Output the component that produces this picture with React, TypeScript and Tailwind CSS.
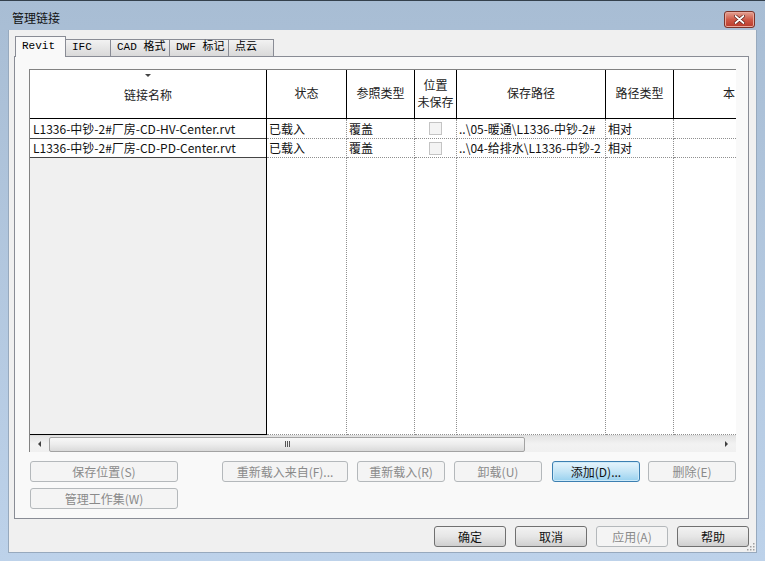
import React from 'react';

const cjk = "font-['Microsoft_YaHei','Noto_Sans_CJK_SC',sans-serif]";

const columns = [
  { w: 'w-[237px]', title: '链接名称', first: true },
  { w: 'w-[80px]', title: '状态' },
  { w: 'w-[68px]', title: '参照类型' },
  { w: 'w-[42px]', title: '位置\n未保存', check: true },
  { w: 'w-[149px]', title: '保存路径' },
  { w: 'w-[68px]', title: '路径类型' },
  { w: 'w-[62px]', title: '本', last: true },
];

// path text is clipped by its column in the dialog
const rows = [
  ['L1336-中钞-2#厂房-CD-HV-Center.rvt', '已载入', '覆盖', '', '..\\05-暖通\\L1336-中钞-2#', '相对', ''],
  ['L1336-中钞-2#厂房-CD-PD-Center.rvt', '已载入', '覆盖', '', '..\\04-给排水\\L1336-中钞-2', '相对', ''],
];

const tabs = [
  { label: 'Revit', w: 'w-[51px]', active: true },
  { label: 'IFC', w: 'w-[46px]' },
  { label: 'CAD 格式', w: 'w-[60px]' },
  { label: 'DWF 标记', w: 'w-[60px]' },
  { label: '点云', w: 'w-[46px]' },
];

const Btn = ({ label, w, disabled, focused }: { label: string; w: string; disabled?: boolean; focused?: boolean }) => {
  let look = 'border-[#707070] bg-gradient-to-b from-[#f2f2f2] via-[#e6e6e6] to-[#cfcfcf] text-[#111]';
  if (disabled) look = 'border-[#b4b8bb] bg-[#f4f4f4] text-[#8a8a8a]';
  if (focused) look = 'border-[#3c7fb1] bg-gradient-to-b from-[#e5f4fc] via-[#c4e5f6] to-[#98d1ef] text-[#111] shadow-[inset_0_0_0_1px_#cdeaf9]';
  return (
    <div className={`${w} h-[21px] shrink-0 rounded-[3px] border ${look} flex items-center justify-center text-[12px] leading-none ${cjk}`}>
      {label}
    </div>
  );
};

const Column = ({ col, idx }: { col: typeof columns[number]; idx: number }) => {
  const first = !!col.first;
  const last = !!col.last;
  return (
    <div className={`${col.w} shrink-0 flex flex-col ${first ? 'bg-[#f0f0f0] border-r border-black' : ''}`}>
      <div
        className={`h-[49px] shrink-0 bg-white border-b border-black ${first || last ? '' : 'border-r border-black'} relative flex items-center ${
          last ? 'justify-end pr-[1px]' : 'justify-center'
        } text-center whitespace-pre-line text-[12px] leading-[17px] text-[#222]`}
      >
        {first && <span className="absolute top-[4px] left-1/2 -translate-x-1/2 w-0 h-0 border-l-[3px] border-r-[3px] border-t-[3px] border-l-transparent border-r-transparent border-t-[#444]" />}
        <span className={col.check ? 'mt-[-2px]' : first ? 'mt-[1px]' : 'mt-[-4px]'}>{col.title}</span>
      </div>
      {rows.map((r, ri) => (
        <div
          key={ri}
          className={`${ri === 0 ? 'h-[20px]' : 'h-[19px]'} shrink-0 overflow-hidden whitespace-nowrap flex items-center text-[12px] leading-[18px] text-[#111] ${
            first
              ? 'bg-white border-b border-[#444] px-[3px]'
              : `bg-white border-b ${last ? '' : 'border-r'} border-dotted border-[#8f8f8f] px-[2px]`
          } ${col.check ? 'justify-center' : ''}`}
        >
          {col.check ? <span className="w-[13px] h-[13px] border border-[#c4c4c4] bg-[#f4f4f4]" /> : r[idx]}
        </div>
      ))}
      <div
        className={`flex-1 ${
          first ? 'border-b border-black' : `bg-white ${last ? '' : 'border-r'} border-b border-dotted border-[#8f8f8f]`
        }`}
      />
    </div>
  );
};

export default function App() {
  return (
    <div className={`w-[765px] h-[561px] overflow-hidden flex flex-col bg-gradient-to-b from-[#a8bdd4] to-[#bdd2ea] border-t border-[#34404c] ${cjk}`}>
      {/* title bar */}
      <div className="h-[29px] shrink-0 flex items-start justify-between pl-[12px] pr-[10px]">
        <span className="mt-[9px] text-[12px] leading-[16px] text-[#111]">管理链接</span>
        <div className="mt-[10px] w-[31px] h-[17px] rounded-[3px] border border-[#7c3329] bg-gradient-to-b from-[#e2a194] via-[#cf5a48] to-[#b8392a] flex items-center justify-center shadow-[inset_0_0_0_1px_#eaa89b]">
          <svg width="11" height="9" viewBox="0 0 11 9">
            <path d="M1.5 1 L9.5 8 M9.5 1 L1.5 8" stroke="#5a1b14" strokeWidth="3.2" strokeLinecap="round" />
            <path d="M1.5 1 L9.5 8 M9.5 1 L1.5 8" stroke="#fff" strokeWidth="1.8" strokeLinecap="round" />
          </svg>
        </div>
      </div>

      {/* client area */}
      <div className="mx-[8px] mb-[8px] flex-1 bg-[#f0f0f0] flex flex-col relative border border-[#97a9bd] border-t-0">
        {/* tabs */}
        <div className="h-[26px] flex items-end pl-[6px]">
          {tabs.map((t) => (
            <div
              key={t.label}
              className={`${t.w} ${
                t.active
                  ? 'h-[21px] bg-[#f9f9f9] border border-b-0 border-[#898c95] z-10 mb-[-1px] pt-[2px]'
                  : 'h-[17px] -ml-px bg-gradient-to-b from-[#f2f2f2] to-[#d9d9d9] border border-b-0 border-[#898c95]'
              } flex items-start pl-[6px] text-[11px] leading-[15px] text-black font-['Liberation_Mono','Noto_Sans_CJK_SC',monospace] whitespace-nowrap`}
            >
              {t.label}
            </div>
          ))}
        </div>

        {/* panel */}
        <div className="ml-[5px] w-[735px] h-[463px] border border-[#898c95] bg-[#f9f9f9] flex flex-col pl-[14px] pt-[12px]">
          {/* grid */}
          <div className="w-[707px] h-[383px] border-l border-t border-[#828282] flex flex-col bg-white">
            <div className="flex-1 flex overflow-hidden">
              {columns.map((c, i) => (
                <Column key={i} col={c} idx={i} />
              ))}
            </div>
            {/* horizontal scrollbar */}
            <div className="h-[17px] shrink-0 bg-gradient-to-b from-[#e4e4e4] via-[#f2f2f2] to-[#f0f0f0] border-t border-[#dcdcdc] flex items-center">
              <div className="w-[19px] h-full flex items-center justify-center">
                <span className="w-0 h-0 border-t-[3px] border-b-[3px] border-r-[3px] border-t-transparent border-b-transparent border-r-[#404040]" />
              </div>
              <div className="w-[476px] h-[15px] rounded-[2px] border border-[#a3a3a3] bg-gradient-to-b from-[#f8f8f8] via-[#ececec] to-[#dadada] flex items-center justify-center">
                <div className="flex gap-[1px]">
                  <span className="w-[1px] h-[6px] bg-[#555]" />
                  <span className="w-[1px] h-[6px] bg-[#555]" />
                  <span className="w-[1px] h-[6px] bg-[#555]" />
                </div>
              </div>
              <div className="flex-1" />
              <div className="w-[19px] h-full flex items-center justify-center">
                <span className="w-0 h-0 border-t-[3px] border-b-[3px] border-l-[3px] border-t-transparent border-b-transparent border-l-[#404040]" />
              </div>
            </div>
          </div>

          {/* buttons */}
          <div className="mt-[9px] flex items-center pl-[1px]">
            <Btn label="保存位置(S)" w="w-[148px]" disabled />
            <div className="w-[44px]" />
            <Btn label="重新载入来自(F)..." w="w-[126px]" disabled />
            <div className="w-[9px]" />
            <Btn label="重新载入(R)" w="w-[88px]" disabled />
            <div className="w-[9px]" />
            <Btn label="卸载(U)" w="w-[88px]" disabled />
            <div className="w-[10px]" />
            <Btn label="添加(D)..." w="w-[88px]" focused />
            <div className="w-[8px]" />
            <Btn label="删除(E)" w="w-[88px]" disabled />
          </div>
          <div className="mt-[6px] pl-[1px] flex">
            <Btn label="管理工作集(W)" w="w-[148px]" disabled />
          </div>
        </div>

        {/* dialog buttons */}
        <div className="mt-[7px] flex justify-end gap-[9px] pr-[7px]">
          <Btn label="确定" w="w-[72px]" />
          <Btn label="取消" w="w-[72px]" />
          <Btn label="应用(A)" w="w-[72px]" disabled />
          <Btn label="帮助" w="w-[72px]" />
        </div>

        {/* size grip */}
        <svg className="absolute right-[1px] bottom-[1px]" width="10" height="10" viewBox="0 0 10 10">
          {[[8, 2], [8, 5], [5, 5], [8, 8], [5, 8], [2, 8]].map(([x, y], i) => (
            <rect key={i} x={x} y={y} width="1.5" height="1.5" fill="#a0a0a0" />
          ))}
        </svg>
      </div>
    </div>
  );
}
